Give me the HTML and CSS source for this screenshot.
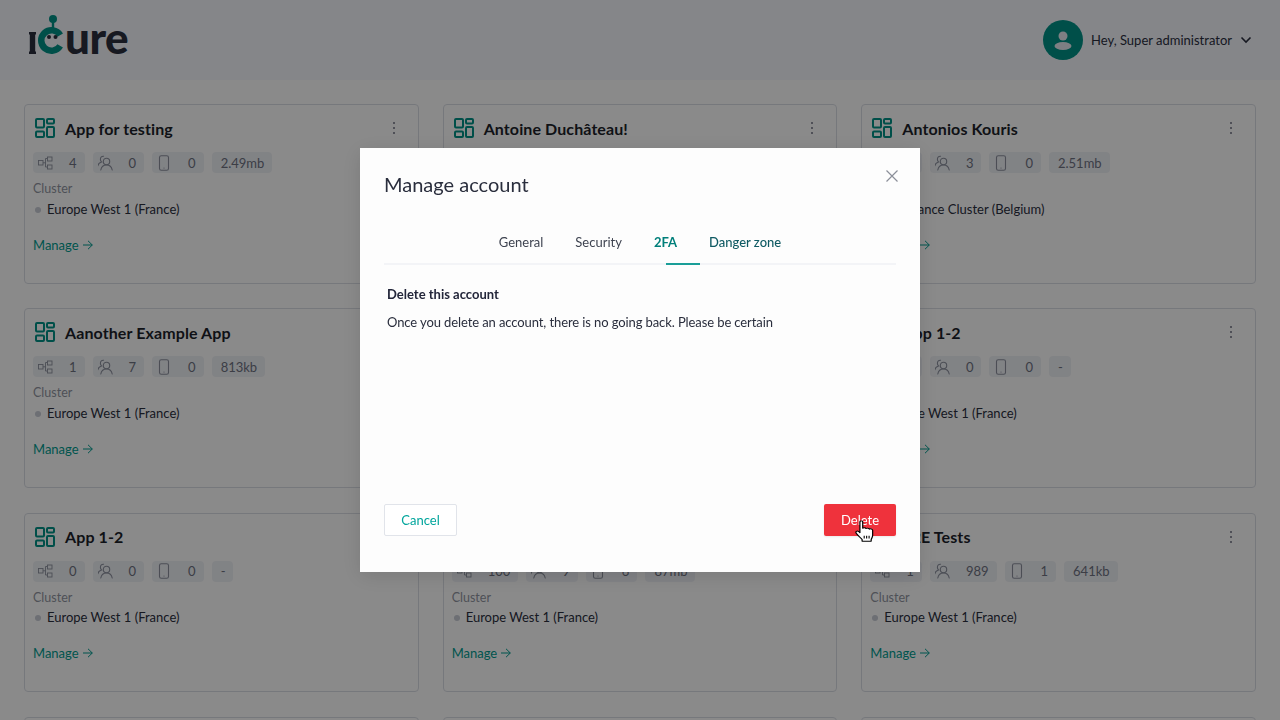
FILE: index.html
```html
<!DOCTYPE html>
<html lang="en">
  <head>
    <meta charset="utf-8">
    <title>iCure - Manage account</title>
    <link rel="stylesheet" href="styles.css">
  </head>
  <body>
    <svg class="sprites" width="0" height="0">
      <symbol id="i-apps" viewBox="0 0 20 20">
        <g fill="none" stroke="currentColor" stroke-width="2">
          <rect x="1" y="1" width="8" height="8.500" rx="1"/>
          <rect x="12" y="1" width="7" height="4.500" rx="1"/>
          <rect x="1" y="13.500" width="8" height="5.500" rx="1"/>
          <rect x="12" y="9" width="7" height="10" rx="1"/>
        </g>
      </symbol>
      <symbol id="i-net" viewBox="0 0 16 16">
        <g fill="none" stroke="currentColor" stroke-width=".9">
          <rect x="0.500" y="5.500" width="4.500" height="4.500"/>
          <rect x="9.500" y="2" width="4.500" height="4"/>
          <rect x="9.500" y="10" width="4.500" height="4"/>
          <path d="M5 7.800H7.500M7.500 3.500V12M7.500 3.500H9.500M7.500 12H9.500"/>
        </g>
      </symbol>
      <symbol id="i-users" viewBox="1 0 16 16">
        <g fill="none" stroke="currentColor" stroke-width="1.100" stroke-linecap="round">
          <circle cx="9.500" cy="6.500" r="3.200"/>
          <path d="M3.800 15C4.400 11.800 6.600 10 9.500 10S14.600 11.800 15.200 15"/>
          <path d="M6.600 1.200C4.800 1 3.400 2.200 3.400 4.200C3.400 5.400 3.800 6.300 4.500 6.900C2.600 7.500 1.300 8.800 .8 10.800"/>
        </g>
      </symbol>
      <symbol id="i-phone" viewBox="0 0 16 16">
        <rect x="2.500" y="0.700" width="9" height="14.600" rx="1.800" fill="none" stroke="currentColor" stroke-width="1.100"/>
        <circle cx="7" cy="13" r=".6" fill="currentColor"/>
      </symbol>
      <symbol id="i-arrow" viewBox="0 0 10 10">
        <path d="M0 5H9.300M5 .8L9.300 5L5 9.200" fill="none" stroke="currentColor" stroke-width="1"/>
      </symbol>
      <symbol id="i-more" viewBox="0 0 4 14">
        <circle cx="2" cy="2" r="1" fill="currentColor"/>
        <circle cx="2" cy="7" r="1" fill="currentColor"/>
        <circle cx="2" cy="12" r="1" fill="currentColor"/>
      </symbol>
    </svg>

    <header class="topbar">
      <div class="logo">
        <svg class="logo-mark" width="37" height="44" viewBox="0 0 37 44">
          <rect x="0" y="18" width="7" height="2.500" fill="#2a2e3d"/>
          <rect x="0" y="37.500" width="7" height="2.500" fill="#2a2e3d"/>
          <rect x="0.800" y="18" width="5.400" height="22" fill="#2a2e3d"/>
          <circle cx="24" cy="5" r="4" fill="#009085"/>
          <rect x="22.800" y="6" width="2.400" height="9" fill="#009085"/>
          <path d="M31.200 21.100A10.250 10.250 0 1 0 31.200 31.900" fill="none" stroke="#009085" stroke-width="6.500"/>
          <circle cx="20" cy="23" r="2" fill="#2a2e3d"/>
          <circle cx="26.500" cy="23" r="2" fill="#2a2e3d"/>
        </svg>
        <span class="logo-text">ure</span>
      </div>
      <div class="account">
        <span class="avatar">
          <svg width="24" height="24" viewBox="0 0 24 24">
            <circle cx="12" cy="8" r="4.500" fill="#e6e8ee"/>
            <ellipse cx="12" cy="18" rx="8.500" ry="4" fill="#e6e8ee"/>
          </svg>
        </span>
        <span class="account-name">Hey, Super administrator</span>
        <svg class="chevron" width="12" height="8" viewBox="0 0 12 8">
          <path d="M1.500 1.500L6 6L10.500 1.500" fill="none" stroke="#2a2e3d" stroke-width="1.600"/>
        </svg>
      </div>
    </header>

    <main class="apps">
      <section class="card">
        <div class="card-head"><svg class="app-icon"><use href="#i-apps"/></svg><h2>App for testing</h2><svg class="more"><use href="#i-more"/></svg></div>
        <div class="stats">
          <span class="chip"><svg><use href="#i-net"/></svg><b>4</b></span>
          <span class="chip"><svg><use href="#i-users"/></svg><b>0</b></span>
          <span class="chip"><svg><use href="#i-phone"/></svg><b>0</b></span>
          <span class="chip"><b>2.49mb</b></span>
        </div>
        <div class="label">Cluster</div>
        <div class="region"><i></i>Europe West 1 (France)</div>
        <a class="manage">Manage <svg><use href="#i-arrow"/></svg></a>
      </section>
      <section class="card">
        <div class="card-head"><svg class="app-icon"><use href="#i-apps"/></svg><h2>Antoine Duchâteau!</h2><svg class="more"><use href="#i-more"/></svg></div>
      </section>
      <section class="card">
        <div class="card-head"><svg class="app-icon"><use href="#i-apps"/></svg><h2>Antonios Kouris</h2><svg class="more"><use href="#i-more"/></svg></div>
        <div class="stats">
          <span class="chip"><svg><use href="#i-net"/></svg><b>2</b></span>
          <span class="chip"><svg><use href="#i-users"/></svg><b>3</b></span>
          <span class="chip"><svg><use href="#i-phone"/></svg><b>0</b></span>
          <span class="chip"><b>2.51mb</b></span>
        </div>
        <div class="label">Cluster</div>
        <div class="region"><i></i>Assistance Cluster (Belgium)</div>
        <a class="manage">Manage <svg><use href="#i-arrow"/></svg></a>
      </section>

      <section class="card">
        <div class="card-head"><svg class="app-icon"><use href="#i-apps"/></svg><h2>Aanother Example App</h2><svg class="more"><use href="#i-more"/></svg></div>
        <div class="stats">
          <span class="chip"><svg><use href="#i-net"/></svg><b>1</b></span>
          <span class="chip"><svg><use href="#i-users"/></svg><b>7</b></span>
          <span class="chip"><svg><use href="#i-phone"/></svg><b>0</b></span>
          <span class="chip"><b>813kb</b></span>
        </div>
        <div class="label">Cluster</div>
        <div class="region"><i></i>Europe West 1 (France)</div>
        <a class="manage">Manage <svg><use href="#i-arrow"/></svg></a>
      </section>
      <section class="card"></section>
      <section class="card">
        <div class="card-head"><svg class="app-icon"><use href="#i-apps"/></svg><h2>App 1-2</h2><svg class="more"><use href="#i-more"/></svg></div>
        <div class="stats">
          <span class="chip"><svg><use href="#i-net"/></svg><b>0</b></span>
          <span class="chip"><svg><use href="#i-users"/></svg><b>0</b></span>
          <span class="chip"><svg><use href="#i-phone"/></svg><b>0</b></span>
          <span class="chip"><b>-</b></span>
        </div>
        <div class="label">Cluster</div>
        <div class="region"><i></i>Europe West 1 (France)</div>
        <a class="manage">Manage <svg><use href="#i-arrow"/></svg></a>
      </section>

      <section class="card">
        <div class="card-head"><svg class="app-icon"><use href="#i-apps"/></svg><h2>App 1-2</h2><svg class="more"><use href="#i-more"/></svg></div>
        <div class="stats">
          <span class="chip"><svg><use href="#i-net"/></svg><b>0</b></span>
          <span class="chip"><svg><use href="#i-users"/></svg><b>0</b></span>
          <span class="chip"><svg><use href="#i-phone"/></svg><b>0</b></span>
          <span class="chip"><b>-</b></span>
        </div>
        <div class="label">Cluster</div>
        <div class="region"><i></i>Europe West 1 (France)</div>
        <a class="manage">Manage <svg><use href="#i-arrow"/></svg></a>
      </section>
      <section class="card">
        <div class="card-head"></div>
        <div class="stats">
          <span class="chip"><svg><use href="#i-net"/></svg><b>100</b></span>
          <span class="chip"><svg><use href="#i-users"/></svg><b>9</b></span>
          <span class="chip"><svg><use href="#i-phone"/></svg><b>6</b></span>
          <span class="chip"><b>87mb</b></span>
        </div>
        <div class="label">Cluster</div>
        <div class="region"><i></i>Europe West 1 (France)</div>
        <a class="manage">Manage <svg><use href="#i-arrow"/></svg></a>
      </section>
      <section class="card">
        <div class="card-head"><svg class="app-icon"><use href="#i-apps"/></svg><h2>E2E Tests</h2><svg class="more"><use href="#i-more"/></svg></div>
        <div class="stats">
          <span class="chip"><svg><use href="#i-net"/></svg><b>1</b></span>
          <span class="chip"><svg><use href="#i-users"/></svg><b>989</b></span>
          <span class="chip"><svg><use href="#i-phone"/></svg><b>1</b></span>
          <span class="chip"><b>641kb</b></span>
        </div>
        <div class="label">Cluster</div>
        <div class="region"><i></i>Europe West 1 (France)</div>
        <a class="manage">Manage <svg><use href="#i-arrow"/></svg></a>
      </section>

      <section class="card"></section>
      <section class="card"></section>
      <section class="card"></section>
    </main>

    <div class="overlay">
      <div class="modal">
        <h1 class="modal-title">Manage account</h1>
        <svg class="modal-close" width="14" height="14" viewBox="0 0 14 14">
          <path d="M1.500 1.500L12.500 12.500M12.500 1.500L1.500 12.500" fill="none" stroke="#8b8f99" stroke-width="1.200"/>
        </svg>
        <nav class="tabs">
          <a class="tab">General</a>
          <a class="tab">Security</a>
          <a class="tab tab-active">2FA</a>
          <a class="tab tab-danger">Danger zone</a>
        </nav>
        <div class="modal-body">
          <h3>Delete this account</h3>
          <p>Once you delete an account, there is no going back. Please be certain</p>
        </div>
        <div class="modal-foot">
          <button class="btn btn-cancel">Cancel</button>
          <button class="btn btn-delete">Delete</button>
        </div>
        <svg class="hand" width="19" height="22" viewBox="1 0 15.500 22.500" preserveAspectRatio="none">
          <path d="M5 1.800C5 .6 7.300 .6 7.300 1.800V8.500C7.800 7.700 9.800 7.700 10 8.800C10.500 8 12.500 8.200 12.700 9.400C13.300 8.700 15.300 9 15.400 10.500V15.500C15.400 17.500 14.600 18.500 14.200 20V21.800H6.800V20C5.500 18 3.800 16.500 2 13.500C1 11.800 2.800 10.700 4 11.800L5 13Z" fill="#fff" stroke="#000" stroke-width="1" stroke-linejoin="round"/>
          <path d="M8.500 16V19M10.500 16V19M12.500 16V19" fill="none" stroke="#000" stroke-width=".9"/>
        </svg>
      </div>
    </div>
  </body>
</html>
```

FILE: styles.css
```css
* {
  box-sizing: border-box;
}
html, body {
  height: 100%;
}
body {
  margin: 0;
  overflow: hidden;
  background-color: #fcfcfc;
  color: #2a2e3d;
  font-family: Lato, "Noto Sans", sans-serif;
  font-size: 13px;
}
.sprites {
  display: block;
  height: 0;
}

/* top bar */
.topbar {
  height: 80px;
  display: flex;
  justify-content: space-between;
  align-items: center;
  padding: 0 28px 0 29px;
  background-color: #f2f4fa;
}
.logo {
  display: flex;
  align-items: flex-end;
  height: 44px;
  margin-top: -8px;
}
.logo-mark {
  display: block;
}
.logo-text {
  position: relative;
  top: -1px;
  margin-left: -1px;
  font-size: 44px;
  font-weight: 900;
  line-height: 40px;
  letter-spacing: -0.5px;
  color: #2a2e3d;
}
.account {
  display: flex;
  align-items: center;
}
.avatar {
  width: 40px;
  height: 40px;
  border-radius: 50%;
  background-color: #009085;
  display: flex;
  justify-content: center;
  align-items: center;
  margin-right: 8px;
}
.account-name {
  font-size: 13px;
}
.chevron {
  margin-left: 8px;
}

/* app cards */
.apps {
  display: grid;
  grid-template-columns: repeat(3, 1fr);
  grid-auto-rows: 179.4px;
  gap: 24.8px 24px;
  padding: 24.3px 24px 24px;
}
.card {
  border: 1px solid #d8dbe2;
  border-radius: 4px;
  padding: 9px 8px;
}
.card-head {
  display: flex;
  align-items: center;
  height: 28px;
  margin-bottom: 10px;
}
.app-icon {
  width: 20px;
  height: 20px;
  margin-left: 2px;
  color: #009085;
}
.card-head h2 {
  margin: 0 0 0 10px;
  font-size: 16px;
  font-weight: 700;
  letter-spacing: 0.1px;
  color: #1c1f2a;
  flex: 1;
}
.more {
  width: 4px;
  height: 14px;
  margin-right: 14px;
  color: #6d7180;
}
.stats {
  display: flex;
  gap: 8px;
  height: 21px;
}
.chip {
  display: flex;
  align-items: center;
  gap: 15px;
  padding: 0 8px 0 5px;
  border-radius: 4px;
  background-color: #eceef3;
  color: #6d7180;
}
.chip svg {
  width: 16px;
  height: 16px;
  color: #8a8f9c;
}
.chip b {
  font-weight: 400;
  font-size: 13px;
}
.chip b:first-child {
  margin-left: 4px;
}
.label {
  margin-top: 8px;
  font-size: 12.5px;
  line-height: 16px;
  color: #8f939e;
}
.region {
  display: flex;
  align-items: center;
  margin-top: 2.75px;
  line-height: 18px;
  color: #2a2e3d;
}
.region i {
  width: 6px;
  height: 6px;
  border-radius: 50%;
  background-color: #c6cad4;
  margin: 1px 6px 0 2px;
}
.manage {
  display: flex;
  align-items: center;
  gap: 4px;
  margin-top: 17px;
  line-height: 20px;
  font-size: 13px;
  color: #009a8e;
}
.manage svg {
  width: 10px;
  height: 10px;
}

/* dialog */
.overlay {
  position: fixed;
  inset: 0;
  display: flex;
  justify-content: center;
  align-items: center;
  background-color: rgba(0, 0, 0, 0.45);
}
.modal {
  position: relative;
  width: 560px;
  height: 424px;
  display: flex;
  flex-direction: column;
  padding: 23px 24px 36px;
  background-color: #fdfdfd;
  box-shadow: 0 4px 20px rgba(0, 0, 0, 0.12);
}
.modal-title {
  margin: 0;
  font-size: 20px;
  font-weight: 400;
  line-height: 26px;
  color: #2a2e3d;
}
.modal-close {
  position: absolute;
  top: 21px;
  right: 21px;
}
.tabs {
  display: flex;
  justify-content: center;
  height: 44px;
  margin-top: 24px;
  border-bottom: 2px solid #f3f4f7;
}
.tab {
  position: relative;
  display: flex;
  align-items: center;
  padding: 0 16px;
  color: #3e4350;
}
.tab-active {
  color: #007f7a;
  font-weight: 700;
}
.tab-active::after {
  content: "";
  position: absolute;
  left: 28px;
  width: 34px;
  bottom: -2px;
  height: 2px;
  background-color: #1a9e98;
}
.tab-danger {
  color: #0f5a63;
  font-weight: 500;
}
.modal-body {
  padding: 0 3px;
}
.modal-body h3 {
  margin: 21px 0 0;
  font-size: 13px;
  font-weight: 700;
  line-height: 17px;
  color: #23263a;
}
.modal-body p {
  margin: 11px 0 0;
  line-height: 17px;
  letter-spacing: -0.1px;
  color: #2a2e3d;
}
.modal-foot {
  margin-top: auto;
  display: flex;
  justify-content: space-between;
}
.btn {
  height: 32px;
  border-radius: 2px;
  font-family: Lato, "Noto Sans", sans-serif;
  font-size: 13px;
}
.btn-cancel {
  width: 73px;
  border: 1px solid #e1e4ea;
  background-color: #fff;
  color: #00a59c;
}
.btn-delete {
  width: 72px;
  border: none;
  background-color: #ef323c;
  color: #fff;
  box-shadow: 0 1px 2px rgba(0, 0, 0, 0.08);
}
.hand {
  position: absolute;
  left: 495px;
  top: 372px;
}
```
